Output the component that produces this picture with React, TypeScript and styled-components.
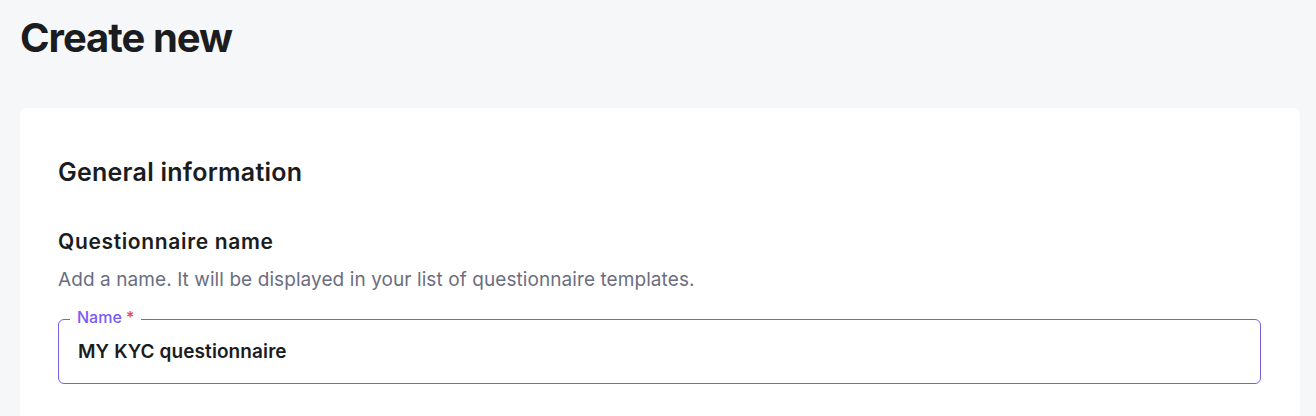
import { FC } from 'react';
import styled, { createGlobalStyle } from 'styled-components';

const GlobalStyle = createGlobalStyle`
  html, body {
    margin: 0;
    padding: 0;
    background: #f6f7f9;
    font-family: Inter, "Noto Sans", sans-serif;
    color: #1b1c20;
  }
`;

const Page = styled.div`
  height: 416px;
  overflow: hidden;
  padding: 14px 16px 0 20px;
  display: flex;
  flex-direction: column;
`;

const Title = styled.h1`
  margin: 0;
  font-size: 40px;
  line-height: 48px;
  font-weight: 700;
  letter-spacing: -1px;
`;

const Card = styled.section`
  margin-top: 46px;
  flex: 1;
  background: #ffffff;
  border-radius: 8px 8px 0 0;
  padding: 48px 39px 0 38px;
`;

const SectionTitle = styled.h2`
  margin: 0;
  font-size: 25px;
  line-height: 32px;
  font-weight: 600;
  letter-spacing: 0.25px;
`;

const FieldTitle = styled.h3`
  margin: 40px 0 0;
  font-size: 21px;
  line-height: 28px;
  font-weight: 600;
  letter-spacing: 0.65px;
`;

const Hint = styled.p`
  margin: 11px 0 0;
  font-size: 19px;
  line-height: 26px;
  color: #6b6e80;
  letter-spacing: 0.08px;
`;

const Field = styled.fieldset`
  margin: 16px 0 0;
  padding: 0 19px 19px;
  border: 1px solid #7260e6;
  border-radius: 6px;
  min-width: 0;
`;

const Legend = styled.legend`
  padding: 0 7px 5px;
  margin-left: -8px;
  font-size: 16px;
  line-height: 16px;
  font-weight: 500;
  color: #7a5cf5;
`;

const Required = styled.span`
  color: #e5484d;
`;

const Input = styled.input`
  display: block;
  width: 100%;
  border: 0;
  outline: none;
  padding: 0;
  margin-top: 10px;
  font-family: inherit;
  font-size: 19px;
  line-height: 24px;
  font-weight: 600;
  letter-spacing: 0.1px;
  color: #1b1c20;
  background: transparent;
`;

const App: FC = () => (
  <>
    <GlobalStyle />
    <Page>
      <Title>Create new</Title>
      <Card>
        <SectionTitle>General information</SectionTitle>
        <FieldTitle>Questionnaire name</FieldTitle>
        <Hint>Add a name. It will be displayed in your list of questionnaire templates.</Hint>
        <Field>
          <Legend>
            Name <Required>*</Required>
          </Legend>
          <Input defaultValue="MY KYC questionnaire" />
        </Field>
      </Card>
    </Page>
  </>
);

export default App;
